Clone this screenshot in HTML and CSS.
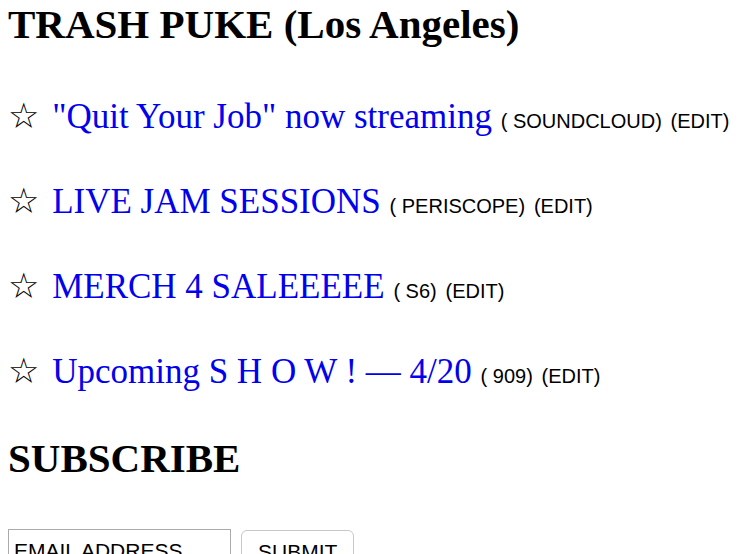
FILE: index.html
```html
<!DOCTYPE html>
<html>
<head>
<meta charset="utf-8">
<link rel="stylesheet" href="styles.css">
</head>
<body>
<h1 class="title">TRASH PUKE (Los Angeles)</h1>
<ul class="links">
  <li class="item"><span class="star">☆</span> <a class="link" href="#">"Quit Your Job" now streaming</a> <span class="meta">( SOUNDCLOUD)</span> <span class="meta">(EDIT)</span></li>
  <li class="item"><span class="star">☆</span> <a class="link" href="#">LIVE JAM SESSIONS</a> <span class="meta">( PERISCOPE)</span> <span class="meta">(EDIT)</span></li>
  <li class="item"><span class="star">☆</span> <a class="link" href="#">MERCH 4 SALEEEEE</a> <span class="meta">( S6)</span> <span class="meta">(EDIT)</span></li>
  <li class="item"><span class="star">☆</span> <a class="link" href="#">Upcoming S H O W ! — 4/20</a> <span class="meta">( 909)</span> <span class="meta">(EDIT)</span></li>
</ul>
<h2 class="title subscribe">SUBSCRIBE</h2>
<form class="form">
  <input class="email" type="text" value="EMAIL ADDRESS">
  <button class="submit" type="button">SUBMIT</button>
</form>
</body>
</html>
```
FILE: styles.css
```css
body {
  margin: 0 8px;
  font-family: "Liberation Serif", "Times New Roman", serif;
  color: #000;
  background: #fff;
}
.title {
  font-size: 41px;
  font-weight: bold;
  margin: 0;
  line-height: 48px;
}
.links {
  list-style: none;
  padding: 0;
  margin: 48px 0 0 0;
}
.item {
  font-size: 35px;
  line-height: 40px;
  height: 40px;
  margin-bottom: 45px;
}
.item:last-child {
  margin-bottom: 0;
}
.star {
  font-family: "DejaVu Sans", sans-serif;
  font-size: 35px;
  margin-right: 4px;
}
.link {
  color: #0000ee;
  text-decoration: none;
}
.meta {
  font-family: "Liberation Sans", Arial, sans-serif;
  font-size: 20px;
}
.subscribe {
  margin-top: 43px;
}
.form {
  margin-top: 47px;
  display: flex;
  align-items: flex-start;
  gap: 10px;
}
.email {
  box-sizing: border-box;
  width: 223px;
  height: 40px;
  font-family: "Liberation Sans", Arial, sans-serif;
  font-size: 21px;
  padding: 4px 5px 0;
  border: 1px solid #aaa;
  margin: 0;
  color: #000;
}
.submit {
  box-sizing: border-box;
  height: 40px;
  margin-top: 1px;
  font-family: "Liberation Sans", Arial, sans-serif;
  font-size: 21px;
  color: #000;
  padding: 4px 16px 0;
  background: #fff;
  border: 1px solid #c8c8c8;
  border-radius: 6px;
}
```
